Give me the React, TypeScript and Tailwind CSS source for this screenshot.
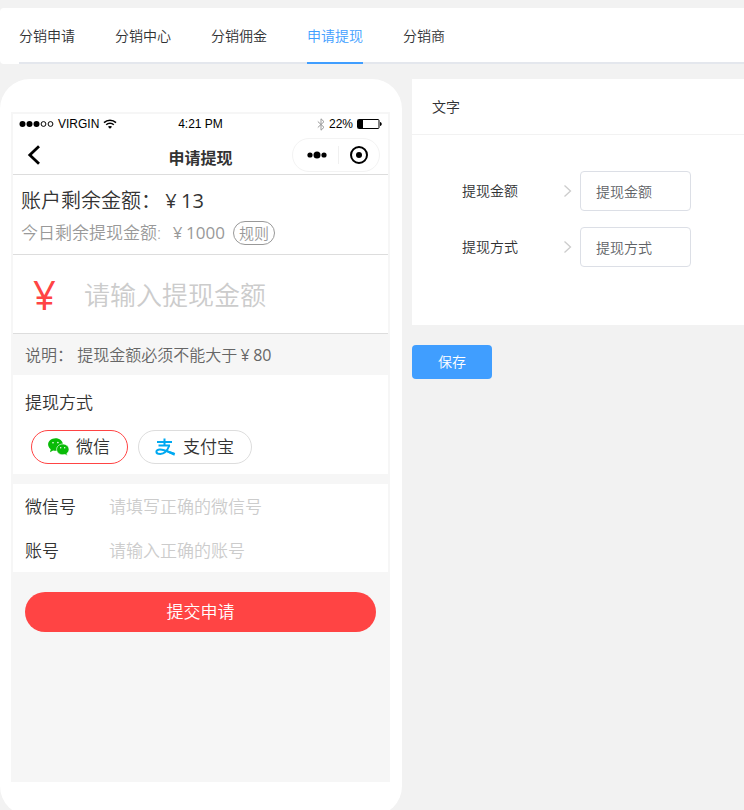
import React, { useState } from 'react';

const tabs = ['分销申请', '分销中心', '分销佣金', '申请提现', '分销商'];

function Money({ value }: { value: number }) {
  return (
    <span className="font-normal">
      <span className="inline-block w-[1em] text-center">¥</span>
      {value}
    </span>
  );
}

function WechatIcon() {
  return (
    <svg width="21" height="18" viewBox="0 0 21 18" fill="#09bb07">
      <path d="M7.5.3C3.5.3.1 3.100.1 6.500c0 1.900 1 3.500 2.600 4.700L2 14.200l3.100-1.700c.8.200 1.600.3 2.400.3 4 0 7.400-2.800 7.400-6.300S11.500.3 7.500.3z" />
      <path
        d="M21 11.400c0-3-2.800-5.400-6.200-5.400s-6.200 2.400-6.200 5.400 2.800 5.400 6.200 5.400c.7 0 1.400-.1 2.100-.3l2.500 1.300-.6-2.200c1.300-1 2.200-2.500 2.200-4.200z"
        stroke="#fff"
        strokeWidth=".7"
      />
      <g fill="#fff">
        <circle cx="5" cy="4.800" r=".8" />
        <circle cx="9.900" cy="4.600" r=".8" />
        <circle cx="12.700" cy="9.800" r=".7" />
        <circle cx="16.700" cy="9.800" r=".7" />
      </g>
    </svg>
  );
}

function AlipayIcon() {
  return (
    <svg width="21" height="18" viewBox="0 0 21 18" fill="none" stroke="#00a9f1" strokeWidth="2">
      <path d="M2 4h15M9.500.5v7M3.500 7.500H15" />
      <path d="M14.300 7.500c-1.600 4.300-4.600 8.400-9 8.400-2.500 0-3.900-.8-3.900-2.200 0-1.400 1.500-2.200 3.600-2.100 4.300.2 8.300 2.200 14 4.300" />
      <path d="m12.500 12.600 7.700 2.400-.9 2.800-6.800-3.200z" fill="#00a9f1" stroke="none" />
    </svg>
  );
}

function StatusBar() {
  return (
    <div className="grid grid-cols-3 items-center h-5 px-1.5 font-['Liberation_Sans',sans-serif] font-normal text-xs text-black">
      <div className="flex items-center gap-1">
        <svg width="35" height="8" viewBox="0 0 35 8">
          <circle cx="3.5" cy="4" r="3" />
          <circle cx="10.5" cy="4" r="3" />
          <circle cx="17.5" cy="4" r="3" />
          <circle cx="24.5" cy="4" r="2.4" fill="none" stroke="#000" />
          <circle cx="31.5" cy="4" r="2.4" fill="none" stroke="#000" />
        </svg>
        <span>VIRGIN</span>
        <svg width="14" height="10" viewBox="0 0 14 10" fill="none" stroke="#000" strokeWidth="1.5">
          <path d="M1 3.6C4.3.3 9.7.3 13 3.6" />
          <path d="M3.2 5.8c2.1-2 5.5-2 7.6 0" />
          <path d="M7 9.8 4.9 7.7c1.2-1 3-1 4.2 0z" fill="#000" stroke="none" />
        </svg>
      </div>
      <span className="text-center">4:21 PM</span>
      <div className="flex items-center justify-end gap-1">
        <svg width="8" height="13" viewBox="0 0 8 13" fill="none" stroke="#999">
          <path d="M.8 3.5 7 9.3 4 12.2V.8l3 2.9L.8 9.5" />
        </svg>
        <span>22%</span>
        <svg width="25" height="10" viewBox="0 0 25 10">
          <rect x=".5" y=".5" width="21.5" height="9" rx="1" fill="none" stroke="#000" />
          <rect x="1" y="1" width="5" height="8" />
          <path d="M23 3c2.3.6 2.3 3.4 0 4z" />
        </svg>
      </div>
    </div>
  );
}

function NavBar() {
  return (
    <div className="relative flex items-center justify-between h-[41px] pt-0.5 pl-3.5 pr-2 border-b border-[#ddd]">
      <button aria-label="返回">
        <svg width="14" height="20" viewBox="0 0 14 20" fill="none" stroke="#000" strokeWidth="2.8">
          <path d="M12 1.2 2.8 10l9.2 8.8" />
        </svg>
      </button>
      <h1 className="absolute inset-x-0 top-3 text-center text-base leading-6 font-bold text-[#333] pointer-events-none">
        申请提现
      </h1>
      <div className="flex items-center h-[34px] w-[88px] pl-1 rounded-full border border-[#f3f3f3]">
        <button aria-label="更多" className="flex flex-1 justify-center">
          <svg width="20" height="8" viewBox="0 0 20 8">
            <circle cx="3" cy="4" r="2.6" />
            <circle cx="10" cy="4" r="3.5" />
            <circle cx="17" cy="4" r="2.6" />
          </svg>
        </button>
        <span className="w-px h-[18px] bg-[#f0f0f0]" />
        <button aria-label="关闭" className="flex flex-1 justify-center">
          <svg width="18" height="18" viewBox="0 0 18 18">
            <circle cx="9" cy="9" r="8" fill="none" stroke="#000" strokeWidth="2" />
            <circle cx="9" cy="9" r="3" />
          </svg>
        </button>
      </div>
    </div>
  );
}

function Field({ id, label, placeholder }: { id: string; label: string; placeholder: string }) {
  return (
    <div className="flex items-center h-11 pt-0.5 px-3 text-[17px]">
      <label htmlFor={id} className="w-21 shrink-0">
        {label}
      </label>
      <input
        id={id}
        placeholder={placeholder}
        className="flex-1 min-w-0 bg-transparent outline-none placeholder:text-[#ccc]"
      />
    </div>
  );
}

function PhonePreview() {
  const [method, setMethod] = useState('wechat');

  return (
    <div className="shrink-0 w-[402px] bg-white rounded-[30px] pt-[33px] pb-[34px] pl-[11px] pr-3">
      <div className="border-2 border-[#f6f6f6] bg-[#f6f6f6] text-[#333] pb-[148px]">
        <div className="bg-white">
          <StatusBar />
          <NavBar />
          <div className="h-20 pt-2.5 px-2 border-b border-[#ddd]">
            <p className="text-xl leading-8">
              账户剩余金额：
              <Money value={13} />
            </p>
            <p className="flex items-center gap-2 text-[17px] leading-8 text-[#999]">
              今日剩余提现金额:
              <Money value={1000} />
              <button className="h-6 px-[5px] rounded-full border border-[#999] text-[15px] leading-none">
                规则
              </button>
            </p>
          </div>
          <div className="flex items-center h-[79px] pt-0.5 px-5 border-b border-[#ddd]">
            <label htmlFor="amount" className="w-[51px] text-[40px] leading-none font-normal text-[#ff4444]">
              ¥
            </label>
            <input
              id="amount"
              placeholder="请输入提现金额"
              className="flex-1 min-w-0 h-12 text-[26px] bg-transparent outline-none placeholder:text-[#ccc]"
            />
          </div>
        </div>

        <p className="h-[41px] pt-px px-3 text-base leading-[41px] text-[#666]">
          说明： 提现金额必须不能大于
          <Money value={80} />
        </p>

        <div className="bg-white px-3 pt-4 pb-2.5 text-[17px]">
          <h2 className="leading-6">提现方式</h2>
          <div className="flex gap-2.5 mt-[15px] px-1.5">
            <button
              onClick={() => setMethod('wechat')}
              className={`flex items-center gap-[7px] h-[34px] pl-4 pr-[17px] rounded-full border ${
                method === 'wechat' ? 'border-[#ff4444]' : 'border-[#ddd]'
              }`}
            >
              <WechatIcon />
              微信
            </button>
            <button
              onClick={() => setMethod('alipay')}
              className={`flex items-center gap-[7px] h-[34px] pl-4 pr-[17px] rounded-full border ${
                method === 'alipay' ? 'border-[#ff4444]' : 'border-[#ddd]'
              }`}
            >
              <AlipayIcon />
              支付宝
            </button>
          </div>
        </div>

        <div className="mt-2.5 bg-white">
          <Field id="wechat" label="微信号" placeholder="请填写正确的微信号" />
          <Field id="account" label="账号" placeholder="请输入正确的账号" />
        </div>

        <div className="px-3 pt-5">
          <button className="w-full h-10 rounded-full bg-[#ff4444] text-[17px] text-white">提交申请</button>
        </div>
      </div>
    </div>
  );
}

function TextRow({ id, label }: { id: string; label: string }) {
  const [value, setValue] = useState(label);

  return (
    <div className="flex items-center">
      <label htmlFor={id} className="w-[101px]">
        {label}
      </label>
      <svg width="9" height="14" viewBox="0 0 9 14" fill="none" stroke="#ccc" strokeWidth="1.3" className="mr-2">
        <path d="m1.5 1.5 6 5.5-6 5.5" />
      </svg>
      <input
        id={id}
        value={value}
        onChange={(e) => setValue(e.target.value)}
        className="w-[111px] h-10 px-[15px] rounded border border-[#dcdfe6] text-[#606266] outline-none focus:border-[#409eff]"
      />
    </div>
  );
}

export default function App() {
  const [active, setActive] = useState('申请提现');

  return (
    <div className="h-screen overflow-y-auto [scrollbar-width:none] bg-[#f2f2f2] pt-2 font-['Open_Sans','Noto_Sans_CJK_SC',sans-serif] font-[350] text-sm text-[#303133]">
      <nav className="bg-white rounded-l pl-[19px]">
        <div className="flex gap-10 border-b-2 border-[#e4e7ed]">
          {tabs.map((tab) => (
            <button
              key={tab}
              onClick={() => setActive(tab)}
              className={`h-14 -mb-0.5 pt-0.5 border-b-2 ${
                active === tab ? 'border-[#409eff] text-[#409eff]' : 'border-transparent'
              }`}
            >
              {tab}
            </button>
          ))}
        </div>
      </nav>

      <main className="flex items-start gap-2.5 mt-[15px]">
        <PhonePreview />
        <div className="flex-1 min-w-0">
          <section className="bg-white">
            <h2 className="h-14 px-5 leading-[55px] border-b border-[#f2f2f2]">文字</h2>
            <div className="flex flex-col gap-4 px-[50px] pt-9 pb-[58px]">
              <TextRow id="text-amount" label="提现金额" />
              <TextRow id="text-method" label="提现方式" />
            </div>
          </section>
          <button className="mt-5 w-20 h-[34px] rounded bg-[#409eff] text-white">保存</button>
        </div>
      </main>
    </div>
  );
}
